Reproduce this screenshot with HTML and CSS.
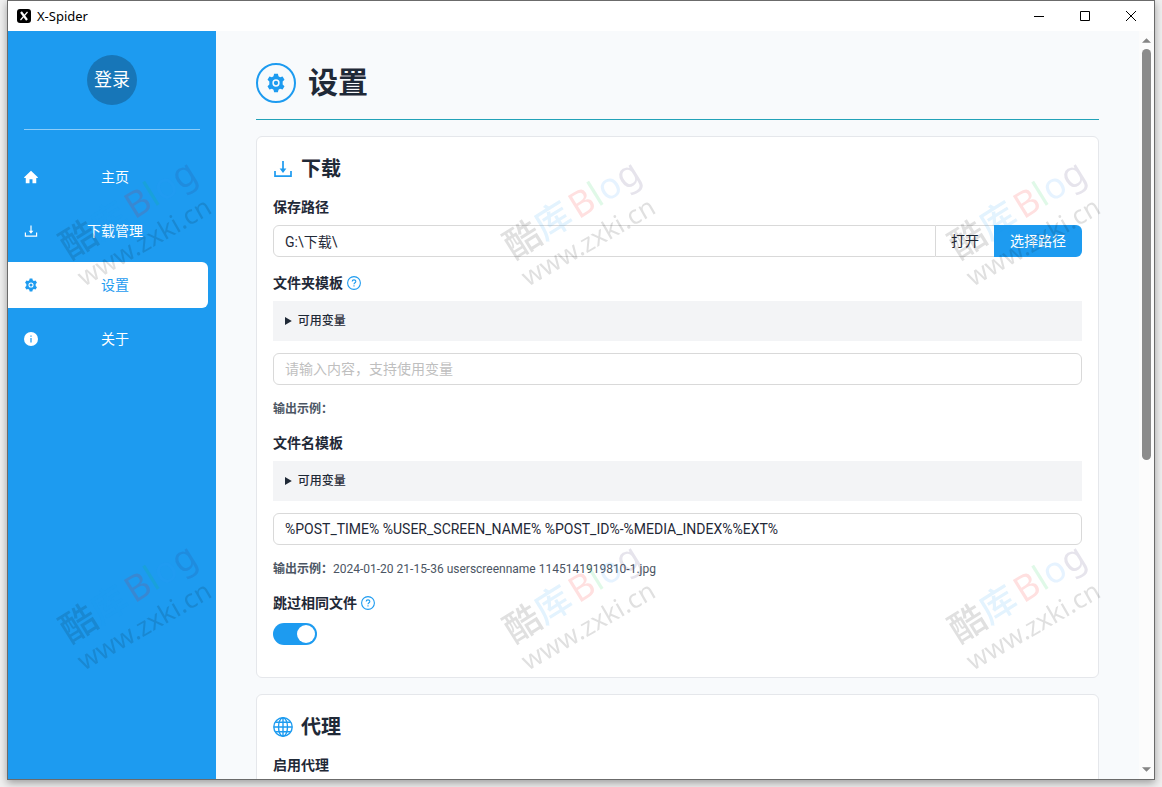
FILE: index.html
```
<!DOCTYPE html>
<html lang="zh-CN">
<head>
<meta charset="utf-8">
<title>X-Spider</title>
<link rel="stylesheet" href="styles.css">
</head>
<body>
<svg class="sprite" aria-hidden="true">
  <symbol id="i-gear" viewBox="0 0 24 24"><path fill="currentColor" fill-rule="evenodd" d="M9.700 1h4.600l.7 3 1.900 1.100 3-.9 2.300 4-2.200 2.100v3.400l2.200 2.100-2.300 4-3-.9-1.900 1.100-.7 3H9.700l-.7-3-1.900-1.100-3 .9-2.300-4L4 13.700v-3.400L1.800 8.200l2.300-4 3 .9L9 4zM12 7.600a4.400 4.400 0 1 0 0 8.800 4.400 4.400 0 0 0 0-8.800zM12 9.400a2.600 2.600 0 1 1 0 5.200 2.600 2.600 0 0 1 0-5.200z"/></symbol>
  <symbol id="i-download" viewBox="0 0 20 20"><path fill="none" stroke="currentColor" stroke-width="1.700" d="M2 12v5.200h16V12M10 2v9"/><path fill="currentColor" d="M6.600 9.500h6.800L10 14z"/></symbol>
  <symbol id="i-home" viewBox="0 0 16 16"><path fill="currentColor" d="M8 .8 15.800 8.300c.3.4.1.8-.4.8H14V15H9.700v-4.500H6.300V15H2V9.100H.6c-.5 0-.7-.4-.4-.8z"/></symbol>
  <symbol id="i-info" viewBox="0 0 16 16"><circle cx="8" cy="8" r="8" fill="currentColor"/><path stroke="#1d9bf0" stroke-width="1.400" d="M8 6.800V12M8 4v1.500"/></symbol>
  <symbol id="i-help" viewBox="0 0 14 14"><g fill="none" stroke="currentColor"><circle cx="7" cy="7" r="6.400" stroke-width="1.100"/><path stroke-width="1.100" d="M5.200 5.600c0-2.300 3.600-2.300 3.600-.1 0 1.300-1.800 1.300-1.800 2.800M7 9.300v1.100"/></g></symbol>
  <symbol id="i-globe" viewBox="0 0 20 20"><g fill="none" stroke="currentColor" stroke-width="1.400"><circle cx="10" cy="10" r="9.200"/><ellipse cx="10" cy="10" rx="4.500" ry="9.200"/><path d="M10 1v18M1 10h18M2.500 5.300h15M2.500 14.700h15"/></g></symbol>
</svg>

<div class="window">
  <header class="titlebar">
    <svg class="app-icon" viewBox="0 0 14 14" aria-hidden="true"><rect width="14" height="14" rx="3"/><path fill="none" stroke="#fff" stroke-width="2.200" d="M4 3l6 8"/><path stroke="#fff" stroke-width="1.200" d="M10.500 3 3.500 11"/></svg>
    <span class="app-name">X-Spider</span>
    <button class="win-btn" aria-label="最小化"><svg viewBox="0 0 10 10"><path d="M0 5.500h10"/></svg></button>
    <button class="win-btn" aria-label="最大化"><svg viewBox="0 0 10 10"><path d="M.5.5h9v9h-9z"/></svg></button>
    <button class="win-btn" aria-label="关闭"><svg viewBox="0 0 10 10"><path d="M0 0l10 10M10 0 0 10"/></svg></button>
  </header>

  <div class="body">
    <aside class="sidebar">
      <button class="avatar">登录</button>
      <hr class="divider">
      <nav class="nav">
        <a class="nav-item" href="#home"><svg class="nav-icon"><use href="#i-home"/></svg><span>主页</span></a>
        <a class="nav-item" href="#downloads"><svg class="nav-icon"><use href="#i-download"/></svg><span>下载管理</span></a>
        <a class="nav-item active" href="#settings" aria-current="page"><svg class="nav-icon"><use href="#i-gear"/></svg><span>设置</span></a>
        <a class="nav-item" href="#about"><svg class="nav-icon"><use href="#i-info"/></svg><span>关于</span></a>
      </nav>
    </aside>

    <main class="content">
      <div class="page-head">
        <span class="page-icon"><svg><use href="#i-gear"/></svg></span>
        <h1>设置</h1>
      </div>

      <section class="card">
        <h2><svg><use href="#i-download"/></svg>下载</h2>

        <div class="field">
          <label class="label" for="path">保存路径</label>
          <div class="path-group">
            <input class="input" id="path" type="text" value="G:\下载\">
            <button class="btn">打开</button>
            <button class="btn primary">选择路径</button>
          </div>
        </div>

        <div class="field">
          <label class="label" for="folder">文件夹模板<svg><use href="#i-help"/></svg></label>
          <details class="vars"><summary>可用变量</summary></details>
          <input class="input" id="folder" type="text" placeholder="请输入内容，支持使用变量">
          <p class="example"><b>输出示例：</b></p>
        </div>

        <div class="field">
          <label class="label" for="file">文件名模板</label>
          <details class="vars"><summary>可用变量</summary></details>
          <input class="input" id="file" type="text" value="%POST_TIME% %USER_SCREEN_NAME% %POST_ID%-%MEDIA_INDEX%%EXT%">
          <p class="example"><b>输出示例：</b>2024-01-20 21-15-36 userscreenname 1145141919810-1.jpg</p>
        </div>

        <div class="field">
          <label class="label" for="skip">跳过相同文件<svg><use href="#i-help"/></svg></label>
          <input class="switch" id="skip" type="checkbox" role="switch" checked>
        </div>
      </section>

      <section class="card">
        <h2><svg><use href="#i-globe"/></svg>代理</h2>
        <div class="field">
          <label class="label" for="proxy">启用代理</label>
          <input class="switch" id="proxy" type="checkbox" role="switch">
        </div>
      </section>
    </main>

    <div class="scrollbar" aria-hidden="true">
      <svg viewBox="0 0 10 5"><path d="M5 0l5 5H0z"/></svg>
      <div class="thumb"></div>
      <svg class="down" viewBox="0 0 10 5"><path d="M0 0h10L5 5z"/></svg>
    </div>
  </div>
</div>

<svg class="watermark" aria-hidden="true">
  <defs>
    <g id="mark">
      <text class="wm-name" transform="rotate(-32)"><tspan class="wm-bold" fill="#000">酷</tspan><tspan class="wm-bold" fill="#1d9bf0">库</tspan><tspan fill="#f00" dx="4">B</tspan><tspan fill="#0c4">l</tspan><tspan fill="#39f">o</tspan><tspan fill="#326">g</tspan></text>
      <text class="wm-url" transform="translate(14 27) rotate(-30)">www.zxki.cn</text>
    </g>
  </defs>
  <use href="#mark" x="70" y="644"/><use href="#mark" x="514" y="644"/><use href="#mark" x="959" y="644"/>
  <use href="#mark" x="70" y="260"/><use href="#mark" x="514" y="260"/><use href="#mark" x="959" y="260"/>
</svg>
</body>
</html>
```
FILE: styles.css
```
* { box-sizing: border-box; }

body {
  margin: 0;
  padding: 0 7px 7px;
  height: 100vh;
  overflow: hidden;
  background: #f0f0f0;
  color: #1f2937;
  font: 14px/20px Roboto, "Noto Sans CJK SC", sans-serif;
}

button, input { font: inherit; color: inherit; margin: 0; }
svg { display: block; flex: none; }
.sprite { display: none; }

.window {
  display: flex;
  flex-direction: column;
  height: 100%;
  border: 1px solid #6b6b6b;
  background: #fff;
  box-shadow: 0 3px 8px rgba(0, 0, 0, .35);
}

.titlebar {
  display: flex;
  align-items: center;
  flex: none;
  height: 30px;
  padding-left: 9px;
  background: #fff;
  color: #000;
}
.app-icon { width: 14px; height: 14px; }
.app-name { flex: 1; margin-left: 6px; font-family: "Noto Sans", sans-serif; font-size: 13px; }
.win-btn {
  display: grid;
  place-items: center;
  width: 46px;
  height: 30px;
  padding: 0;
  border: 0;
  background: none;
}
.win-btn svg { width: 10px; height: 10px; fill: none; stroke: #000; overflow: visible; }

.body { display: flex; flex: 1; min-height: 0; }

.sidebar {
  flex: none;
  width: 208px;
  padding-top: 24px;
  background: #1d9bf0;
  color: #fff;
}
.avatar {
  display: block;
  width: 50px;
  height: 50px;
  margin: 0 auto;
  padding: 0;
  border: 0;
  border-radius: 50%;
  background: #1776b8;
  font-size: 18px;
}
.divider { height: 1px; margin: 24px 16px; border: 0; background: #8ecdf8; }
.nav { display: flex; flex-direction: column; gap: 8px; padding-right: 8px; }
.nav-item {
  display: flex;
  align-items: center;
  height: 46px;
  padding: 0 16px;
  border-radius: 0 6px 6px 0;
  color: inherit;
  text-decoration: none;
}
.nav-item span { flex: 1; text-align: center; }
.nav-item.active { background: #fff; color: #1d9bf0; }
.nav-icon { width: 14px; height: 14px; }

.content {
  flex: 1;
  min-width: 0;
  padding: 32px 40px;
  overflow: hidden;
  background: #f8fafc;
}
.page-head {
  display: flex;
  align-items: center;
  gap: 12px;
  padding-bottom: 16px;
  border-bottom: 1px solid #22a2b8;
}
.page-icon {
  display: grid;
  place-items: center;
  width: 40px;
  height: 40px;
  border: 2px solid #1d9bf0;
  border-radius: 50%;
  color: #1d9bf0;
}
.page-icon svg { width: 20px; height: 20px; }
h1 { margin: 0; font-size: 30px; line-height: 40px; }

.card {
  margin-top: 16px;
  padding: 16px;
  border: 1px solid #e5e7eb;
  border-radius: 6px;
  background: #fff;
}
h2 {
  display: flex;
  align-items: center;
  gap: 8px;
  margin: 0 0 12px;
  font-size: 20px;
  line-height: 32px;
}
h2 svg { width: 20px; height: 20px; color: #1d9bf0; }

.field { margin-bottom: 16px; }
.label { display: flex; align-items: center; gap: 4px; margin-bottom: 8px; font-weight: 600; }
.label svg { width: 14px; height: 14px; color: #1d9bf0; }

.input {
  display: block;
  width: 100%;
  height: 32px;
  padding: 0 11px;
  border: 1px solid #d9d9d9;
  border-radius: 6px;
  background: #fff;
}
.input::placeholder { color: #bfbfbf; opacity: 1; }

.path-group { display: flex; }
.path-group .input { flex: 1; min-width: 0; border-radius: 6px 0 0 6px; }
.btn {
  flex: none;
  height: 32px;
  padding: 0 15px;
  border: 1px solid #d9d9d9;
  border-width: 1px 0;
  background: #fff;
}
.btn.primary {
  padding: 0 16px;
  border: 0;
  border-radius: 0 6px 6px 0;
  background: #1d9bf0;
  color: #fff;
}

.vars {
  margin-bottom: 12px;
  padding: 10px 12px;
  background: #f3f4f6;
  font-size: 12px;
  font-weight: 500;
}
.example { margin: 16px 0; color: #4b5563; font-size: 12px; line-height: 16px; }

.switch {
  display: flex;
  align-items: center;
  appearance: none;
  width: 44px;
  height: 22px;
  margin-top: 10px;
  padding: 0 2px;
  border-radius: 11px;
  background: #bfbfbf;
}
.switch::before {
  content: "";
  width: 18px;
  height: 18px;
  border-radius: 50%;
  background: #fff;
}
.switch:checked { justify-content: flex-end; background: #1d9bf0; }

.scrollbar {
  display: flex;
  flex-direction: column;
  align-items: center;
  flex: none;
  width: 15px;
  padding: 7px 0;
  background: #fcfcfc;
}
.scrollbar svg { width: 9px; height: 5px; fill: #858585; }
.thumb { width: 9px; height: 56%; margin-top: 6px; border-radius: 5px; background: #8b8b8b; }
.scrollbar .down { margin-top: auto; }

.watermark {
  position: fixed;
  inset: 0;
  width: 100%;
  height: 100%;
  opacity: .12;
  pointer-events: none;
  font-family: "Noto Sans", "Noto Sans CJK SC", sans-serif;
}
.wm-name { font-size: 36px; }
.wm-bold { font-weight: 500; }
.wm-url { font-size: 26px; }
```
